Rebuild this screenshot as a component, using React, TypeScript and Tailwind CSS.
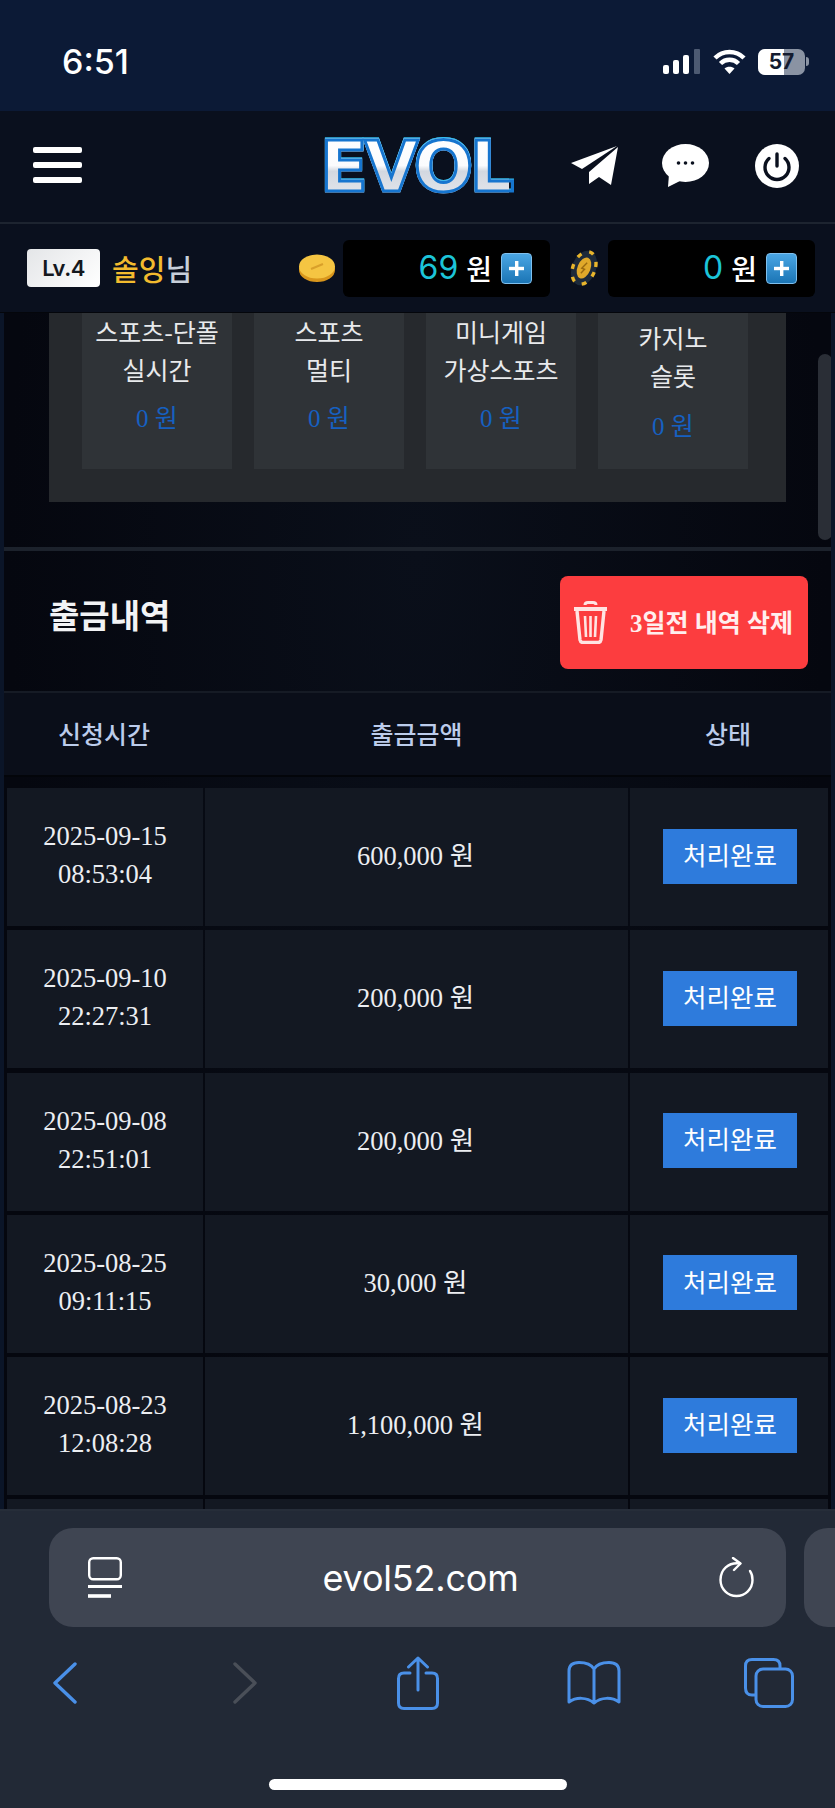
const KR = 'font-["Noto_Sans_CJK_KR","Noto_Sans",sans-serif]';
const SERIF = 'font-["Liberation_Serif","Noto_Sans_CJK_KR",serif]';

const games = [
  { lines: ['스포츠-단폴', '실시간'], pad: 'pt-0', moneyGap: 'mt-[12px]' },
  { lines: ['스포츠', '멀티'], pad: 'pt-0', moneyGap: 'mt-[12px]' },
  { lines: ['미니게임', '가상스포츠'], pad: 'pt-0', moneyGap: 'mt-[12px]' },
  { lines: ['카지노', '슬롯'], pad: 'pt-[6px]', moneyGap: 'mt-[14px]' },
];

const rows = [
  { date: '2025-09-15', time: '08:53:04', amount: '600,000 원' },
  { date: '2025-09-10', time: '22:27:31', amount: '200,000 원' },
  { date: '2025-09-08', time: '22:51:01', amount: '200,000 원' },
  { date: '2025-08-25', time: '09:11:15', amount: '30,000 원' },
  { date: '2025-08-23', time: '12:08:28', amount: '1,100,000 원' },
  { date: '', time: '', amount: '' },
];

function StatusBar() {
  return (
    <div className="h-[111px] shrink-0 flex items-center pl-[62px] pr-[26px] pt-[12px] bg-[#0c1a36] text-white">
      <span className='font-["Inter",sans-serif] text-[34px] font-medium leading-none'>6:51</span>
      <div className="ml-auto flex items-center">
        <svg width="37" height="26" viewBox="0 0 37 26" fill="#fff">
          <rect x="0" y="16" width="6" height="9" rx="2" />
          <rect x="10" y="11" width="6" height="14" rx="2" />
          <rect x="20" y="6" width="6" height="19" rx="2" />
          <rect x="31" y="0" width="6" height="25" rx="1" fill="#4d5a72" />
        </svg>
        <svg className="ml-[13px]" width="33" height="25" viewBox="0 0 33 25" fill="none" stroke="#fff" strokeWidth="4.5">
          <path d="M2 9 C10 1 23 1 31 9" />
          <path d="M7.5 14.5 C12.5 9.5 20.5 9.5 25.5 14.5" />
          <path d="M16.5 25 L11.5 19.5 C14 17 19 17 21.5 19.5 Z" fill="#fff" stroke="none" />
        </svg>
        <div className="ml-[12px] relative w-[47px] h-[26px] rounded-[7px] overflow-hidden bg-[#8a93a3] flex">
          <div className="w-[26px] h-full bg-white" />
          <span className='absolute inset-0 flex items-center justify-center font-["Inter",sans-serif] text-[21px] font-bold text-[#141c30] leading-none'>57</span>
        </div>
        <div className="ml-[1px] w-[3px] h-[9px] rounded-r-full bg-[#8a93a3]" />
      </div>
    </div>
  );
}

function Plane() {
  return (
    <svg width="47" height="40" viewBox="0 0 47 40" fill="#fff">
      <path d="M0 17 L46 0 L11 23 Z" />
      <path d="M47 1 L40 39 L28 31 L18 38 L18 26 Z" />
    </svg>
  );
}

function Chat() {
  return (
    <svg width="47" height="43" viewBox="0 0 47 43">
      <ellipse cx="23.5" cy="19" rx="23.5" ry="19" fill="#fff" />
      <path d="M7 30 L6 43 L20 36 Z" fill="#fff" />
      <circle cx="16.5" cy="19" r="1.8" fill="#0a101e" />
      <circle cx="23.5" cy="19" r="1.8" fill="#0a101e" />
      <circle cx="30.5" cy="19" r="1.8" fill="#0a101e" />
    </svg>
  );
}

function Power() {
  return (
    <svg width="44" height="44" viewBox="0 0 44 44" fill="none">
      <circle cx="22" cy="22" r="22" fill="#fff" />
      <path d="M14 14.5 A12 12 0 1 0 30 14.5" stroke="#0a101e" strokeWidth="3.4" strokeLinecap="round" />
      <path d="M22 10 V22" stroke="#0a101e" strokeWidth="3.4" strokeLinecap="round" />
    </svg>
  );
}

function Header() {
  return (
    <div className="h-[113px] shrink-0 flex items-center pl-[33px] bg-[#0a101e] border-b-2 border-[#1d2430] pb-[2px]">
      <div className="w-[49px] flex flex-col gap-[9px] mt-[-2px]">
        <div className="h-[6px] rounded-[2px] bg-white" />
        <div className="h-[6px] rounded-[2px] bg-white" />
        <div className="h-[6px] rounded-[2px] bg-white" />
      </div>
      <span className='ml-[238px] mt-[3px] w-[189px] text-center font-["DejaVu_Sans",sans-serif] text-[70px] leading-none font-bold tracking-[-3.5px] whitespace-nowrap text-transparent bg-clip-text bg-[linear-gradient(180deg,#ffffff_0%,#fafbfd_48%,#d3d8e0_56%,#e6e9ee_100%)] [-webkit-text-stroke:3px_#1675cf] drop-shadow-[0_-1px_0_#35bdf0]'>
        EVOL
      </span>
      <div className="ml-[62px]"><Plane /></div>
      <div className="ml-[44px]"><Chat /></div>
      <div className="ml-[46px]"><Power /></div>
    </div>
  );
}

function Coin() {
  return (
    <svg width="36" height="28" viewBox="0 0 36 28">
      <ellipse cx="18" cy="16" rx="18" ry="12" fill="#d9961c" />
      <ellipse cx="18" cy="12.5" rx="18" ry="12" fill="#f5c542" />
      <path d="M12 15 L24 10" stroke="#d9a02a" strokeWidth="2" />
    </svg>
  );
}

function Chip() {
  return (
    <svg width="28" height="36" viewBox="0 0 28 36">
      <g transform="rotate(22 14 18)">
        <ellipse cx="14" cy="18" rx="12" ry="18" fill="#1d2a3a" />
        <ellipse cx="14" cy="18" rx="11" ry="17" fill="none" stroke="#e8b52c" strokeWidth="3.4" strokeDasharray="5 8" />
        <ellipse cx="14" cy="18" rx="6.5" ry="11" fill="#e0a92a" />
        <path d="M15 12 L12 19 H15 L13 24" stroke="#9a6a10" strokeWidth="1.4" fill="none" />
      </g>
    </svg>
  );
}

function Balance({ value }: { value: string }) {
  return (
    <div className="w-[207px] h-[57px] rounded-[6px] bg-black flex items-center justify-end pr-[18px]">
      <span className='font-["Inter",sans-serif] text-[32px] leading-none text-[#1cc4d8]'>{value}</span>
      <span className={`${KR} ml-[8px] text-[28px] leading-none font-medium text-white`}>원</span>
      <span className="ml-[9px] w-[31px] h-[31px] rounded-[4px] border border-[#7fc0ee] bg-[linear-gradient(180deg,#4aa6e4,#1b75b5)] flex items-center justify-center text-white">
        <svg width="17" height="17" viewBox="0 0 17 17" fill="#fff">
          <rect x="7" y="1" width="3.4" height="15" />
          <rect x="1" y="6.8" width="15" height="3.4" />
        </svg>
      </span>
    </div>
  );
}

function InfoRow() {
  return (
    <div className="h-[89px] shrink-0 flex items-center pl-[27px] bg-[#0a101e] border-b border-[#04060b]">
      <span className="w-[73px] h-[38px] rounded-[4px] bg-[linear-gradient(135deg,#e4e6e8,#ffffff)] flex items-center justify-center font-['Inter',sans-serif] text-[22px] font-semibold text-[#15181d] tracking-[-0.5px]">
        Lv.4
      </span>
      <span className={`${KR} ml-[12px] text-[29px] leading-none font-medium text-[#f3bb2e]`}>
        솔잉<span className="text-[#c8cfda]">님</span>
      </span>
      <div className="ml-auto flex items-center pr-[20px]">
        <Coin />
        <div className="ml-[8px]"><Balance value="69" /></div>
        <div className="ml-[20px] mr-[10px]"><Chip /></div>
        <Balance value="0" />
      </div>
    </div>
  );
}

function GamePanel() {
  return (
    <div className="h-[234px] shrink-0 pl-[45px] pr-[45px] relative">
      <div className="h-[189px] bg-[#26292d] pl-[33px] pr-[38px]">
        <div className="grid grid-cols-4 gap-[22px] h-[156px]">
          {games.map((g, i) => (
            <div key={i} className={`${KR} ${g.pad} bg-[#2f3337] text-center text-[25px] leading-[38px] text-[#e8eaec]`}>
              <div className="mt-[-1px]">
                {g.lines.map((l) => <div key={l}>{l}</div>)}
              </div>
              <div className={`${SERIF} ${g.moneyGap} text-[25px] leading-[38px] text-[#1660c0]`}>0 원</div>
            </div>
          ))}
        </div>
      </div>
      {/* overlay scrollbar */}
      <div className="absolute right-[-1px] top-[41px] w-[14px] h-[186px] rounded-full bg-[#2a2e36]" />
    </div>
  );
}

function Trash() {
  return (
    <svg width="33" height="43" viewBox="0 0 33 43" fill="none" stroke="#ffe4e2" strokeWidth="2.6">
      <path d="M0 8 H33" strokeWidth="4" />
      <path d="M11 4 Q11 1.5 14 1.5 H19 Q22 1.5 22 4" strokeWidth="3" />
      <path d="M3 10 L6 39 Q6.5 41.5 9 41.5 H24 Q26.5 41.5 27 39 L30 10" strokeWidth="3.4" />
      <path d="M11 15 L12 36 M16.5 15 V36 M22 15 L21 36" />
    </svg>
  );
}

function WithdrawHead() {
  return (
    <>
      <div className="h-[4px] shrink-0 bg-[#1c222c]" />
      <div className="h-[142px] shrink-0 flex items-center pl-[45px] pr-[23px] border-b-2 border-[#161b25]">
        <h2 className={`${KR} text-[33px] font-bold text-[#f2f3f5] mt-[-12px]`}>출금내역</h2>
        <button className="ml-auto w-[248px] h-[93px] mt-[3px] rounded-[8px] bg-[#fc3d3f] flex items-center pl-[14px]">
          <Trash />
          <span className={`${SERIF} ml-[23px] pt-[3px] text-[25px] font-bold text-[#ffeeee] whitespace-nowrap`}>3일전 내역 삭제</span>
        </button>
      </div>
      <div className={`${KR} h-[84px] shrink-0 grid grid-cols-[200px_425px_198px] items-center text-center text-[25px] font-medium text-[#bccceb] bg-[#0a0e19] border-b-2 border-[#03050a]`}>
        <span>신청시간</span>
        <span>출금금액</span>
        <span>상태</span>
      </div>
    </>
  );
}

function Row({ date, time, amount }: { date: string; time: string; amount: string }) {
  return (
    <div className={`${SERIF} h-[138px] shrink-0 grid grid-cols-[196px_423px_198px] gap-[2px] text-white`}>
      <div className="bg-[#131822] flex flex-col items-center justify-center text-[26.5px] leading-[38px] text-[#eceef2] pb-[4px]">
        <span>{date}</span>
        <span>{time}</span>
      </div>
      <div className="bg-[#131822] flex items-center justify-center text-[26.5px] text-[#eceef2] pl-[-2px] pr-[2px]">
        {amount}
      </div>
      <div className="bg-[#131822] flex items-center justify-center pl-[2px] pb-[2px]">
        {date && (
          <span className={`${KR} w-[134px] h-[55px] bg-[#2e7bdc] flex items-center justify-center text-[25.5px] text-white pb-[4px]`}>
            처리완료
          </span>
        )}
      </div>
    </div>
  );
}

function SafariBar() {
  return (
    <div className="h-[299px] shrink-0 bg-[#222936] border-t-2 border-[#262d39] flex flex-col">
      <div className="mt-[17px] flex pl-[49px]">
        <div className="w-[737px] h-[99px] shrink-0 rounded-[24px] bg-[#3f4552] flex items-center pl-[39px] pr-[32px] text-white">
          <svg className="shrink-0" width="34" height="41" viewBox="0 0 34 41" fill="none" stroke="#fff" strokeWidth="2.4">
            <rect x="1.2" y="1.2" width="31.6" height="21" rx="4" />
            <path d="M0 29.5 H34" strokeWidth="3" />
            <path d="M0 39 H23" strokeWidth="3.6" />
          </svg>
          <span className='flex-1 text-center font-["Inter",sans-serif] text-[36px] tracking-[-0.2px] leading-none'>evol52.com</span>
          <svg className="shrink-0" width="35" height="41" viewBox="0 0 35 41" fill="none" stroke="#fff" strokeWidth="2.4">
            <path d="M21 6.5 C9 5 1.5 13 1.5 23 A16 16 0 1 0 33.5 23 C33.5 19 32.5 16 31 14" strokeLinecap="round" />
            <path d="M14 1 L21.5 6.5 L15 13" strokeLinecap="round" strokeLinejoin="round" />
          </svg>
        </div>
        <div className="ml-[18px] w-[60px] h-[99px] shrink-0 rounded-l-[24px] bg-[#3f4552]" />
      </div>
      <div className="mt-[29px] flex items-center pl-[53px] text-[#4a90e8]">
        <svg width="24" height="42" viewBox="0 0 24 42" fill="none" stroke="currentColor" strokeWidth="3.4" strokeLinecap="round" strokeLinejoin="round">
          <path d="M22 2 L2 21 L22 40" />
        </svg>
        <svg className="ml-[156px]" width="24" height="42" viewBox="0 0 24 42" fill="none" stroke="#4a4f58" strokeWidth="3.4" strokeLinecap="round" strokeLinejoin="round">
          <path d="M2 2 L22 21 L2 40" />
        </svg>
        <svg className="ml-[140px]" width="42" height="54" viewBox="0 0 42 54" fill="none" stroke="currentColor" strokeWidth="3" strokeLinecap="round" strokeLinejoin="round">
          <path d="M13 17 H7 Q1.5 17 1.5 22.5 V47 Q1.5 52.5 7 52.5 H35 Q40.5 52.5 40.5 47 V22.5 Q40.5 17 35 17 H29" />
          <path d="M21 34 V2 M11.5 11 L21 2 L30.5 11" />
        </svg>
        <svg className="ml-[128px]" width="54" height="44" viewBox="0 0 54 44" fill="none" stroke="currentColor" strokeWidth="3" strokeLinecap="round" strokeLinejoin="round">
          <path d="M27 8 C24 3 18 1.5 12 1.5 C5 1.5 2 5 2 10 V41 C9 36 20 36 27 42 C34 36 45 36 52 41 V10 C52 5 49 1.5 42 1.5 C36 1.5 30 3 27 8 V42" />
        </svg>
        <svg className="ml-[123px]" width="50" height="50" viewBox="0 0 50 50" fill="none" stroke="currentColor" strokeWidth="3">
          <path d="M36 11 V8 Q36 1.5 29.5 1.5 H8 Q1.5 1.5 1.5 8 V30 Q1.5 37 8 37 H12" />
          <rect x="12" y="11" width="36.5" height="37.5" rx="7" />
        </svg>
      </div>
      <div className="mt-auto mb-[18px] mx-auto w-[298px] h-[11px] rounded-full bg-white" />
    </div>
  );
}

export default function App() {
  return (
    <div className="w-[835px] h-[1808px] flex flex-col overflow-hidden bg-[#0c1a36]">
      <StatusBar />
      <Header />
      <InfoRow />
      <main className="flex-1 min-h-0 overflow-hidden pl-[4px] flex flex-col bg-[#0b1528]">
        <div className="w-[827px] flex-1 min-h-0 flex flex-col overflow-hidden bg-[radial-gradient(ellipse_at_50%_20%,#0a0f1a_0%,#05070f_70%)]">
          <GamePanel />
          <WithdrawHead />
          <div className="mt-[11px] pl-[3px] flex flex-col gap-[4.3px]">
            {rows.map((r, i) => <Row key={i} {...r} />)}
          </div>
        </div>
      </main>
      <SafariBar />
    </div>
  );
}
